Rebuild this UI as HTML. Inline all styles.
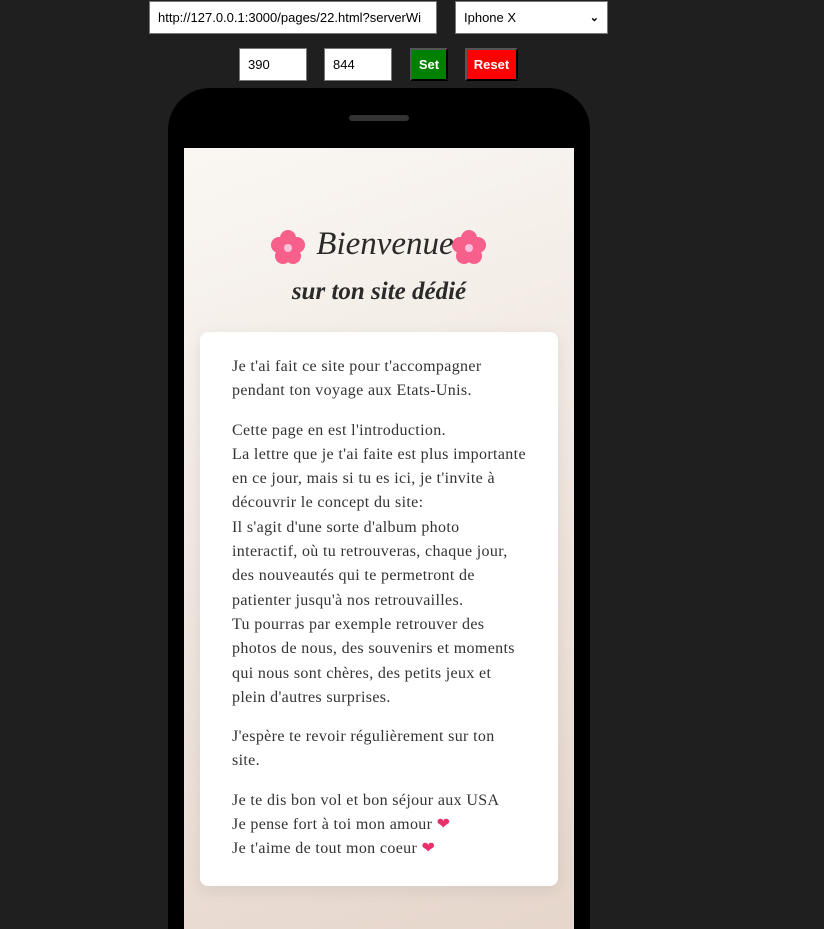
<!DOCTYPE html>
<html><head><meta charset="utf-8"><style>
html,body{margin:0;width:824px;height:929px;overflow:hidden}
body{background:#1f1f1f;position:relative;font-family:"Liberation Sans",sans-serif}
.abs{position:absolute;box-sizing:border-box}
.inp{background:#fff;border:1px solid #767676;font-size:13px;color:#000;padding:0 8px;display:flex;align-items:center}
.btn{color:#fff;font-size:13px;font-weight:bold;display:flex;align-items:center;justify-content:center;border:2px outset #555}
.phone{left:168px;top:88px;width:422px;height:841px;background:#000;border-radius:42px 42px 0 0}
.screen{left:184px;top:148px;width:390px;height:781px;background:linear-gradient(160deg,#faf7f3 0%,#efe6df 50%,#e6d6cc 100%)}
.card{left:200px;top:332px;width:358px;height:554px;background:#fff;border-radius:8px;box-shadow:0 4px 16px rgba(0,0,0,.08);padding:23px 0 0 32px;font-family:"Liberation Serif",serif;font-size:16px;letter-spacing:0.35px;line-height:24.3px;color:#333;white-space:nowrap}
.card p{margin:0 0 15px}
h1{position:absolute;margin:0;width:390px;text-align:center;font-family:"Liberation Serif",serif;font-style:italic;font-weight:bold;color:#2a2a2a}
</style></head><body>
<div class="abs inp" style="left:149px;top:1px;width:288px;height:33px">http://127.0.0.1:3000/pages/22.html?serverWi</div>
<div class="abs inp" style="left:455px;top:1px;width:153px;height:33px;justify-content:space-between">Iphone X<span style="font-size:11px;font-weight:bold">&#8964;</span></div>
<div class="abs inp" style="left:239px;top:48px;width:68px;height:33px">390</div>
<div class="abs inp" style="left:324px;top:48px;width:68px;height:33px">844</div>
<div class="abs btn" style="left:410px;top:48px;width:38px;height:33px;background:#008000">Set</div>
<div class="abs btn" style="left:465px;top:48px;width:53px;height:33px;background:#f00">Reset</div>
<div class="abs phone"></div>
<div class="abs" style="left:349px;top:115px;width:60px;height:6px;background:#333;border-radius:3px"></div>
<div class="abs screen"></div>
<svg class="abs" style="left:270px;top:229px" width="36" height="36" viewBox="0 0 36 36"><g fill="#f7608a"><circle cx="18" cy="9" r="8"/><circle cx="27" cy="16" r="8"/><circle cx="23" cy="27" r="8"/><circle cx="13" cy="27" r="8"/><circle cx="9" cy="16" r="8"/></g><circle cx="18" cy="19" r="4" fill="#f9c2dc"/></svg>
<svg class="abs" style="left:451px;top:229px" width="36" height="36" viewBox="0 0 36 36"><g fill="#f7608a"><circle cx="18" cy="9" r="8"/><circle cx="27" cy="16" r="8"/><circle cx="23" cy="27" r="8"/><circle cx="13" cy="27" r="8"/><circle cx="9" cy="16" r="8"/></g><circle cx="18" cy="19" r="4" fill="#f9c2dc"/></svg>
<h1 style="left:190px;top:226px;font-size:33px;font-weight:normal">Bienvenue</h1>
<h1 style="left:184px;top:278px;font-size:25px">sur ton site dédié</h1>
<div class="abs card">
<p>Je t'ai fait ce site pour t'accompagner<br>pendant ton voyage aux Etats-Unis.</p>
<p>Cette page en est l'introduction.<br>La lettre que je t'ai faite est plus importante<br>en ce jour, mais si tu es ici, je t'invite à<br>découvrir le concept du site:<br>Il s'agit d'une sorte d'album photo<br>interactif, où tu retrouveras, chaque jour,<br>des nouveautés qui te permetront de<br>patienter jusqu'à nos retrouvailles.<br>Tu pourras par exemple retrouver des<br>photos de nous, des souvenirs et moments<br>qui nous sont chères, des petits jeux et<br>plein d'autres surprises.</p>
<p>J'espère te revoir régulièrement sur ton<br>site.</p>
<p>Je te dis bon vol et bon séjour aux USA<br>Je pense fort à toi mon amour <span style="color:#e8306a">&#10084;</span><br>Je t'aime de tout mon coeur <span style="color:#e8306a">&#10084;</span></p>
</div>
</body></html>
